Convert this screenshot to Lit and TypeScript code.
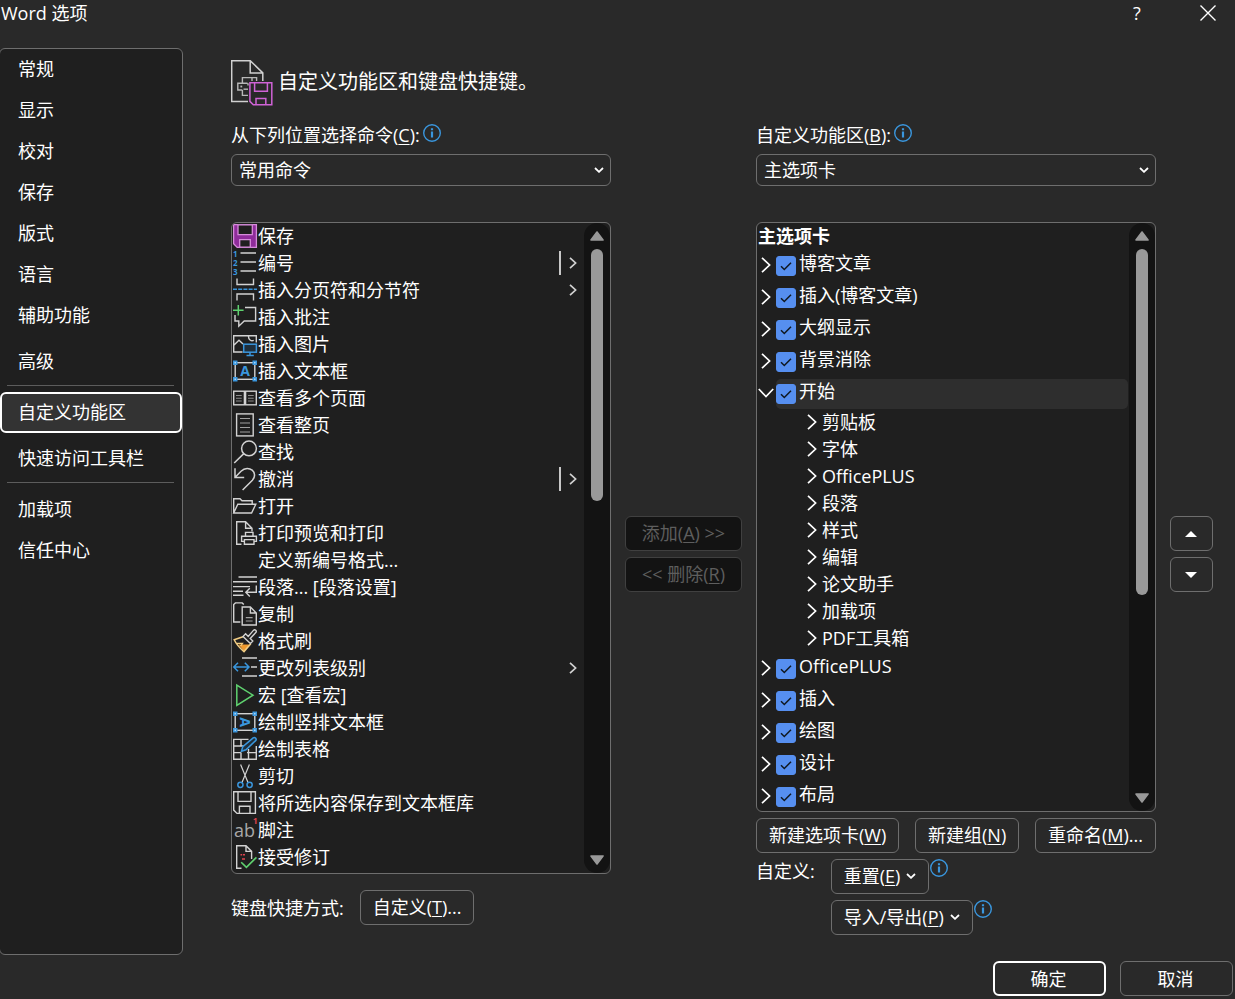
import { LitElement, html, svg, css, nothing, type TemplateResult } from "lit";
import { customElement, property, state } from "lit/decorators.js";
import { classMap } from "lit/directives/class-map.js";

const G = "#d2d2d2";
const BLUE = "#3a96dd";
const GREEN = "#5fd16f";

const corners = (fill: string) => svg`
  <g fill=${fill}>
    <rect x="0" y="1.5" width="4.5" height="4.5"/><rect x="19.5" y="1.5" width="4.5" height="4.5"/>
    <rect x="0" y="18" width="4.5" height="4.5"/><rect x="19.5" y="18" width="4.5" height="4.5"/>
  </g>
  <g fill="#a9d4f5">
    <rect x="1.5" y="3" width="1.5" height="1.5"/><rect x="21" y="3" width="1.5" height="1.5"/>
    <rect x="1.5" y="19.5" width="1.5" height="1.5"/><rect x="21" y="19.5" width="1.5" height="1.5"/>
  </g>`;

const icons: Record<string, TemplateResult> = {
  save: svg`<path d="M.6.6H23.4V23.4H4.2L.6 19.8Z" fill="#8f2c9b" stroke="#d68bda" stroke-width="1.3"/>
    <path d="M5 .8V10.7H19.3V.8ZM6.7 23.2V15.7H17.3V23.2Z" fill="#1f1f1f" stroke="#d68bda" stroke-width="1.3"/>`,
  numbering: svg`<path d="M7.5 2H23M7.5 11H23M7.5 20H23" stroke=${G} stroke-width="1.4"/>
    <g fill=${BLUE} font-size="8" font-weight="700" font-family="Open Sans"><text x="0" y="6">1</text><text x="0" y="15">2</text><text x="0" y="24">3</text></g>`,
  pagebreak: svg`<path d="M4 .5V6.5H20.5V.5M4 22.5V16H20.5V22.5" stroke=${G} stroke-width="1.4"/>
    <path d="M0 11.2H24" stroke=${BLUE} stroke-width="1.4" stroke-dasharray="4 1.2"/>`,
  comment: svg`<path d="M12 2.5H22.6V16H11.2L5.8 21.2V16H2V10" stroke=${G} stroke-width="1.4"/>
    <path d="M5.3 0V10.4M0 5.2H10.6" stroke=${GREEN} stroke-width="1.5"/>`,
  picture: svg`<path d="M9.5 20H.7V3.7H23.3V10.5M.8 13.2L6 8.2L10 12M15.5 4.5C15.4 7.5 18 9.5 20.8 8.3" stroke=${G} stroke-width="1.4"/>
    <rect x="10.7" y="12.2" width="12.7" height="8" fill="#1f2f3c" stroke=${BLUE} stroke-width="1.5"/>
    <path d="M17 20.2V23.4M13.5 23.4H20.8" stroke=${BLUE} stroke-width="1.5"/>`,
  textbox: svg`<rect x="2.2" y="3.7" width="19.6" height="16.6" stroke=${G} stroke-width="1.4"/>${corners(BLUE)}
    <text x="12" y="17" text-anchor="middle" font-size="14" font-weight="700" font-family="Open Sans" fill=${BLUE}>A</text>`,
  pages: svg`<rect x=".7" y="5.2" width="22.6" height="13.6" stroke=${G} stroke-width="1.4"/><path d="M12 5V19" stroke=${G} stroke-width="2.6"/>
    <path d="M3 9.5H8.7M3 12.2H8.7M3 15H8.7M15 9.5H20.7M15 12.2H20.7M15 15H20.7" stroke="#8a8a8a" stroke-width="1.1"/>`,
  page: svg`<rect x="3.6" y=".9" width="16.6" height="22" stroke=${G} stroke-width="1.4"/>
    <path d="M7 5.5H17M7 10H17M7 14.5H17M7 19H17" stroke="#a0a0a0" stroke-width="1.2"/>`,
  find: svg`<circle cx="16" cy="8.4" r="7.4" stroke=${G} stroke-width="1.5"/><path d="M10.8 13.6L1.2 23" stroke=${G} stroke-width="1.5"/>`,
  undo: svg`<path d="M2 1.2V10.4H11.2M2.2 10.2L8 4.2C16-3.4 26 6 19.4 13.2L9.6 23" stroke=${G} stroke-width="1.5"/>`,
  open: svg`<path d="M.7 19V4.7H7L9 6.8H19.2V10.2M.7 19L4.8 10.2H22.8L18.6 19Z" stroke=${G} stroke-width="1.4"/>`,
  print: svg`<path d="M8.5 23.2H3.7V.8H12.6L19 7.2V10.5M12.6.8V7.2H19" stroke=${G} stroke-width="1.4"/>
    <path d="M12.5 15.2V11.4H20V15.2M11.4 20.4H8.6V15.2H23.4V20.4H21M11.4 18.6H21V23.2H11.4Z" stroke=${G} stroke-width="1.4"/>`,
  paragraph: svg`<path d="M5.5 2H24M0 6.8H24M0 11.6H17M0 16.2H10M0 20.2H10.5M23.3 10.5V17.2H13M16.8 13.2L12.8 17.2L16.8 21.4" stroke=${G} stroke-width="1.4"/>`,
  copy: svg`<path d="M7.3 20H.7V2.6L2.4.9H9.2L10.8 2.6" stroke=${G} stroke-width="1.4"/>
    <path d="M9.2 5H17.4L23.3 11V23H9.2ZM17.4 5V11H23.3" stroke=${G} stroke-width="1.4"/><path d="M12.8 15.7H19.6M12.8 19H19.6" stroke="#a0a0a0" stroke-width="1.2"/>`,
  painter: svg`<path d="M5.5 15.5L17.5 15.5L11 22.3Z" fill="#f09a2e"/>
    <path d="M10 7.7L1.2 10.8C3 14.6 6.6 19 11 22.6L17.8 14.8" stroke="#f2cd83" stroke-width="1.5"/>
    <path d="M4 14.4H9.6L7.6 17" stroke="#f2cd83" stroke-width="1.2"/>
    <path d="M10 7.4L12.6 4.8L15.2 7.4L20.4 1.4C22-.1 24.2 2 22.8 3.6L17.2 9.4L19.8 12L17.4 14.6Z" stroke=${G} stroke-width="1.4"/>`,
  level: svg`<path d="M9 2H24M18 11H24M9 20H24" stroke=${G} stroke-width="1.4"/>
    <path d="M.8 11H16M5 6.8L.8 11L5 15.2M11.8 6.8L16 11L11.8 15.2" stroke=${BLUE} stroke-width="1.5"/>`,
  macro: svg`<path d="M3.8 2V22.4L20 12.2Z" stroke=${GREEN} stroke-width="1.5"/>`,
  vtextbox: svg`<rect x="2.2" y="3.7" width="19.6" height="16.6" stroke=${G} stroke-width="1.4"/>${corners(BLUE)}
    <text x="12" y="17" transform="rotate(90 12 12)" text-anchor="middle" font-size="14" font-weight="700" font-family="Open Sans" fill=${BLUE}>A</text>`,
  drawtable: svg`<path d="M15.5 2.4H.7V22.2H23.3V9M.7 9H11M.7 15.6H8M14 15.6H23.3M8 2.4V9M8 15.6V22.2M15.5 12V22.2" stroke=${G} stroke-width="1.4"/>
    <path d="M20.2.9C21.8-.3 24 1.8 22.9 3.4L13 12.8L8.4 14.3L9.8 9.7Z" fill="#1f2f3c" stroke=${BLUE} stroke-width="1.5"/>`,
  cut: svg`<path d="M7.6.4L15 18.6M16.4.4L9 18.6" stroke=${G} stroke-width="1.2"/>
    <circle cx="7.4" cy="20.8" r="2.6" stroke=${BLUE} stroke-width="1.5"/><circle cx="16.6" cy="20.8" r="2.6" stroke=${BLUE} stroke-width="1.5"/>`,
  savesel: svg`<path d="M.7.7H22.4V22.4H4L.7 19.1ZM5 .7V10.4H18V.7M6.4 22.4V15.2H17V22.4" stroke=${G} stroke-width="1.4"/>`,
  footnote: svg`<text x="1" y="19" font-size="18" font-family="Open Sans" fill="#a8a8a8">ab</text>
    <text x="20" y="6" font-size="8" font-family="Open Sans" font-weight="700" fill="#e0444f">1</text>`,
  accept: svg`<path d="M8.5 23.2H3.7V.8H13L18.6 6.4V14M13 .8V6.4H18.6" stroke=${G} stroke-width="1.4"/>
    <path d="M7.5 9.7H9.2M10 9.7H12M9 14H12" stroke="#e0444f" stroke-width="1.5"/>
    <path d="M8.2 17.2L13.4 22.4L23.4 12.4" stroke=${GREEN} stroke-width="1.6"/>`,
};

const infoIcon = html`<svg class="info" viewBox="0 0 18 18" width="18" height="18" fill="none" role="img" aria-label="信息">
  <circle cx="9" cy="9" r="8.3" stroke="#3a96dd" stroke-width="1.4"/><path d="M9 4.2V6.2M9 7.6V13.6" stroke="#3a96dd" stroke-width="2.2"/></svg>`;
const smallChevron = html`<svg class="down" viewBox="0 0 10 6" width="10" height="6" fill="none" aria-hidden="true">
  <path d="M1 1L5 4.8L9 1" stroke="#fff" stroke-width="1.8"/></svg>`;

const base = css`
  *, *::before, *::after { box-sizing: border-box; }
  button, select, input { font: inherit; color: inherit; margin: 0; }
  svg { display: block; flex: none; }
  u { text-decoration-thickness: 1px; text-underline-offset: 2px; }
`;

/** Scrolling frame with a drawn track, arrows and thumb. */
@customElement("list-frame")
export class ListFrame extends LitElement {
  @property({ type: Number }) thumb = 50;

  static styles = [base, css`
    :host { display: flex; border: 1px solid #6e6e6e; border-radius: 6px; background: #1f1f1f; overflow: hidden; }
    .view { flex: 1; min-width: 0; overflow: hidden; }
    .bar { flex: none; width: 26px; border-radius: 13px; background: #131313; display: flex; flex-direction: column; align-items: center; padding: 8px 0; gap: 8px; }
    .rail { flex: 1; width: 12px; }
    .thumb { border-radius: 6px; background: #999; }
  `];

  render() {
    return html`
      <div class="view"><slot></slot></div>
      <div class="bar" aria-hidden="true">
        <svg viewBox="0 0 14 10" width="14" height="10"><path d="M7 1L13 9H1Z" fill="#999" stroke="#999" stroke-width="1.6" stroke-linejoin="round"/></svg>
        <div class="rail"><div class="thumb" style="height:${this.thumb}%"></div></div>
        <svg viewBox="0 0 14 10" width="14" height="10"><path d="M7 9L13 1H1Z" fill="#999" stroke="#999" stroke-width="1.6" stroke-linejoin="round"/></svg>
      </div>`;
  }
}

type Command = { icon?: string; label: string; more?: boolean; split?: boolean };
const commands: Command[] = [
  { icon: "save", label: "保存" },
  { icon: "numbering", label: "编号", more: true, split: true },
  { icon: "pagebreak", label: "插入分页符和分节符", more: true },
  { icon: "comment", label: "插入批注" },
  { icon: "picture", label: "插入图片" },
  { icon: "textbox", label: "插入文本框" },
  { icon: "pages", label: "查看多个页面" },
  { icon: "page", label: "查看整页" },
  { icon: "find", label: "查找" },
  { icon: "undo", label: "撤消", more: true, split: true },
  { icon: "open", label: "打开" },
  { icon: "print", label: "打印预览和打印" },
  { label: "定义新编号格式..." },
  { icon: "paragraph", label: "段落... [段落设置]" },
  { icon: "copy", label: "复制" },
  { icon: "painter", label: "格式刷" },
  { icon: "level", label: "更改列表级别", more: true },
  { icon: "macro", label: "宏 [查看宏]" },
  { icon: "vtextbox", label: "绘制竖排文本框" },
  { icon: "drawtable", label: "绘制表格" },
  { icon: "cut", label: "剪切" },
  { icon: "savesel", label: "将所选内容保存到文本框库" },
  { icon: "footnote", label: "脚注" },
  { icon: "accept", label: "接受修订" },
];

@customElement("command-list")
export class CommandList extends LitElement {
  static styles = [base, css`
    :host { display: block; }
    ul { list-style: none; margin: 0; padding: 0 7px 2px 1px; }
    li { display: flex; align-items: center; height: 27px; padding-bottom: 1px; white-space: nowrap; }
    .icon { flex: none; width: 24px; height: 24px; margin-right: 1px; overflow: visible; }
    .label { flex: 1; line-height: 24px; }
    .split { width: 2px; height: 24px; margin-right: 8px; background: #c8c8c8; }
  `];

  render() {
    return html`<ul role="listbox" aria-label="常用命令">
      ${commands.map((c) => html`<li role="option">
        <svg class="icon" viewBox="0 0 24 24" fill="none" aria-hidden="true">${c.icon ? icons[c.icon] : nothing}</svg>
        <span class="label">${c.label}</span>
        ${c.split ? html`<span class="split"></span>` : nothing}
        ${c.more ? html`<svg viewBox="0 0 8 12" width="8" height="12" fill="none" aria-hidden="true"><path d="M1 .8L6.6 6L1 11.2" stroke=${G} stroke-width="1.7"/></svg>` : nothing}
      </li>`)}
    </ul>`;
  }
}

type Tab = { label: string; checked: boolean; open?: boolean; groups?: string[] };

@customElement("tab-tree")
export class TabTree extends LitElement {
  @state() private tabs: Tab[] = [
    { label: "博客文章", checked: true },
    { label: "插入(博客文章)", checked: true },
    { label: "大纲显示", checked: true },
    { label: "背景消除", checked: true },
    {
      label: "开始", checked: true, open: true,
      groups: ["剪贴板", "字体", "OfficePLUS", "段落", "样式", "编辑", "论文助手", "加载项", "PDF工具箱"],
    },
    { label: "OfficePLUS", checked: true },
    { label: "插入", checked: true },
    { label: "绘图", checked: true },
    { label: "设计", checked: true },
    { label: "布局", checked: true },
  ];

  static styles = [base, css`
    :host { display: block; white-space: nowrap; line-height: 24px; }
    .head { height: 27px; padding-left: 1px; line-height: 26px; font-weight: 700; }
    ul { list-style: none; margin: 0; padding: 0; }
    .row { display: flex; align-items: flex-start; height: 32px; padding-right: 1px; }
    .twisty { flex: none; display: grid; place-items: center; width: 19px; height: 32px; padding: 0 2px 2px 0; border: 0; background: none; }
    .item { flex: 1; display: flex; align-items: flex-start; gap: 3px; height: 30px; margin-top: 1px; border-radius: 5px; }
    .item.selected { background: #2e2e2e; }
    .check { display: grid; margin-top: 5px; }
    .check > * { grid-area: 1 / 1; }
    input { appearance: none; width: 20px; height: 20px; border: 1px solid #8a8a8a; border-radius: 3px; }
    input:checked { border-color: #568ff0; background: #568ff0; }
    input:not(:checked) + svg { visibility: hidden; }
    .check svg { pointer-events: none; }
    .group { display: flex; align-items: center; height: 27px; padding: 0 0 3px 47px; }
    .group .twisty { height: 24px; width: 18px; padding-bottom: 0; }
  `];

  private toggle(i: number) {
    this.tabs = this.tabs.map((t, n) => (n === i ? { ...t, open: !t.open } : t));
  }

  render() {
    const right = html`<svg viewBox="0 0 10 16" width="10" height="16" fill="none"><path d="M1 .8L8.6 8L1 15.2" stroke="#fff" stroke-width="1.7"/></svg>`;
    const down = html`<svg viewBox="0 0 16 10" width="16" height="10" fill="none"><path d="M.8 1L8 8.6L15.2 1" stroke="#fff" stroke-width="1.7"/></svg>`;
    return html`
      <div class="head">主选项卡</div>
      <ul>
        ${this.tabs.map((t, i) => html`<li>
          <div class="row">
            <button class="twisty" aria-label="展开 ${t.label}" aria-expanded=${t.open ? "true" : "false"} @click=${() => this.toggle(i)}>${t.open ? down : right}</button>
            <div class=${classMap({ item: true, selected: t.label === "开始" })}>
              <span class="check">
                <input type="checkbox" id="tab-${i}" .checked=${t.checked}>
                <svg viewBox="0 0 20 20" width="20" height="20" fill="none" aria-hidden="true"><path d="M5 10.2L8.3 13.5L15 6.8" stroke="#101820" stroke-width="1.5"/></svg>
              </span>
              <label for="tab-${i}">${t.label}</label>
            </div>
          </div>
          ${t.open && t.groups ? html`<ul>${t.groups.map((g) => html`<li class="group">
            <button class="twisty" aria-label="展开 ${g}">${right}</button><span>${g}</span></li>`)}</ul>` : nothing}
        </li>`)}
      </ul>`;
  }
}

const sections: string[][] = [
  ["常规", "显示", "校对", "保存", "版式", "语言", "辅助功能"],
  ["高级"],
  ["自定义功能区"],
  ["快速访问工具栏"],
  ["加载项", "信任中心"],
];

@customElement("app-root")
export class AppRoot extends LitElement {
  @state() private current = "自定义功能区";

  static styles = [base, css`
    :host {
      display: flex; flex-direction: column; min-height: 100vh; box-sizing: border-box;
      background: #292929; color: #fff; font: 18px/24px "Open Sans", "Noto Sans CJK SC", sans-serif;
    }
    .title { display: flex; align-items: center; height: 28px; padding: 0 18px 0 1px; margin-bottom: 20px; }
    .title h1 { flex: 1; margin: 0; padding-bottom: 2px; font-size: 18px; font-weight: 400; line-height: 26px; }
    .icon-button { display: grid; place-items: center; height: 28px; padding: 0 0 2px; border: 0; background: none; }
    .help { width: 24px; margin-right: 50px; }
    .body { flex: 1; display: flex; }
    nav { flex: none; width: 184px; margin-left: -1px; border: 1px solid #6e6e6e; border-radius: 6px; background: #1f1f1f; }
    .nav-item { display: block; width: 100%; height: 41px; padding: 0 0 2px 16px; border: 2px solid transparent; border-radius: 6px; background: none; text-align: left; }
    .nav-item.current { border-color: #fff; background: #333; }
    .section + .section { margin-top: 5px; }
    .section.ruled { margin-top: 3px; padding-top: 6px; }
    .section.ruled::before { content: ""; display: block; height: 1px; margin: -6px 8px 6px 7px; background: #5c5c5c; }
    main { flex: 1; min-width: 0; padding: 12px 22px 0 48px; }
    .intro { display: flex; align-items: center; gap: 5px; height: 46px; margin-bottom: 16px; }
    .intro h2 { margin: 0; padding-bottom: 2px; font-size: 20px; font-weight: 400; line-height: 28px; }
    .columns { display: grid; grid-template-columns: minmax(0, 380fr) auto minmax(0, 400fr) 43px; column-gap: 14px; }
    .column { display: flex; flex-direction: column; min-width: 0; }
    .caption { display: flex; gap: 3px; height: 32px; line-height: 26px; }
    .pick { display: grid; align-items: center; margin-bottom: 36px; }
    .pick > * { grid-area: 1 / 1; }
    .pick .down { justify-self: end; margin-right: 7px; pointer-events: none; }
    select { appearance: none; width: 100%; height: 32px; padding: 0 7px; border: 1px solid #6e6e6e; border-radius: 6px; background: #292929; }
    .info { margin-top: 2px; }
    .side { display: flex; flex-direction: column; gap: 6px; padding-top: 394px; }
    .button { display: inline-flex; align-items: center; justify-content: center; gap: 6px; height: 35px; padding: 0 12px 2px; border: 1px solid #6e6e6e; border-radius: 6px; background: #292929; white-space: nowrap; }
    .button:disabled { border-color: #404040; background: #131313; color: #5e5e5e; }
    .transfer { width: 117px; padding: 0 0 2px; }
    .move { padding: 0 2px 0 0; }
    .keys { display: flex; align-items: center; gap: 16px; margin-top: 16px; }
    .keys span { line-height: 24px; }
    .tabs-view { height: 590px; }
    .edit { display: flex; justify-content: space-between; margin-top: 6px; }
    .custom { display: grid; grid-template-columns: auto 1fr; gap: 6px 16px; margin-top: 6px; }
    .custom .with-info { grid-column: 2; display: flex; gap: 1px; }
    .custom .info { margin: 0; }
    footer { display: flex; justify-content: flex-end; gap: 14px; padding: 6px 2px 3px; }
    .dialog { width: 113px; padding: 0 2px 0 0; }
    .primary { border: 2px solid #fff; }
  `];

  render() {
    return html`
      <header class="title">
        <h1>Word 选项</h1>
        <button class="icon-button help" aria-label="帮助">?</button>
        <button class="icon-button" aria-label="关闭">
          <svg viewBox="0 0 18 18" width="18" height="18" fill="none"><path d="M1.5 1.5L16.5 16.5M16.5 1.5L1.5 16.5" stroke="#fff" stroke-width="1.4"/></svg>
        </button>
      </header>
      <div class="body">
        <nav aria-label="Word 选项">
          ${sections.map((items, i) => html`<div class=${classMap({ section: true, ruled: i === 2 || i === 4 })}>
            ${items.map((name) => html`<button class=${classMap({ "nav-item": true, current: name === this.current })}
              @click=${() => { this.current = name; }}>${name}</button>`)}
          </div>`)}
        </nav>
        <main>
          <div class="intro">
            <svg viewBox="0 0 42 46" width="42" height="46" fill="none" aria-hidden="true">
              <path d="M17 41.4H.7V.7H19.2L31.8 12.9V21M19.2.7V12.9H31.8" stroke="#d0d0d0" stroke-width="1.5"/>
              <path d="M21 21V17.6H11.4V23.2M16.5 23.2H6.8V30H11.4M21.5 17.6H25.6V21M11.4 30V35.4H17M17 25.6V23.2" stroke="#b8b8b8" stroke-width="1.4"/>
              <path d="M12.5 29.2H17" stroke="#b8b8b8" stroke-width="1.4"/>
              <rect x="9.4" y="25.6" width="1.8" height="1.8" fill="#b8b8b8"/>
              <path d="M18.9 22.8H40.8V44.7H22.3L18.9 41.4ZM23.6 22.8V31.2H36.4V22.8M25 44.7V38.4H34.8V44.7" stroke="#cf63d6" stroke-width="1.5"/>
            </svg>
            <h2>自定义功能区和键盘快捷键。</h2>
          </div>
          <div class="columns">
            <section class="column">
              <div class="caption"><label for="source">从下列位置选择命令(<u>C</u>):</label>${infoIcon}</div>
              <div class="pick"><select id="source"><option>常用命令</option></select>${smallChevron}</div>
              <list-frame .thumb=${42.2}><command-list></command-list></list-frame>
              <div class="keys"><span>键盘快捷方式:</span><button class="button"><span>自定义(<u>T</u>)...</span></button></div>
            </section>
            <div class="side">
              <button class="button transfer" disabled><span>添加(<u>A</u>) &gt;&gt;</span></button>
              <button class="button transfer" disabled><span>&lt;&lt; 删除(<u>R</u>)</span></button>
            </div>
            <section class="column">
              <div class="caption"><label for="target">自定义功能区(<u>B</u>):</label>${infoIcon}</div>
              <div class="pick"><select id="target"><option>主选项卡</option></select>${smallChevron}</div>
              <list-frame class="tabs-view" .thumb=${64.6}><tab-tree></tab-tree></list-frame>
              <div class="edit">
                <button class="button"><span>新建选项卡(<u>W</u>)</span></button>
                <button class="button"><span>新建组(<u>N</u>)</span></button>
                <button class="button"><span>重命名(<u>M</u>)...</span></button>
              </div>
              <div class="custom">
                <span>自定义:</span>
                <div class="with-info"><button class="button"><span>重置(<u>E</u>)</span>${smallChevron}</button>${infoIcon}</div>
                <div class="with-info"><button class="button"><span>导入/导出(<u>P</u>)</span>${smallChevron}</button>${infoIcon}</div>
              </div>
            </section>
            <div class="side">
              <button class="button move" aria-label="上移"><svg viewBox="0 0 12 6" width="12" height="6"><path d="M6 0L12 6H0Z" fill="#fff"/></svg></button>
              <button class="button move" aria-label="下移"><svg viewBox="0 0 12 6" width="12" height="6"><path d="M6 6L12 0H0Z" fill="#fff"/></svg></button>
            </div>
          </div>
        </main>
      </div>
      <footer>
        <button class="button dialog primary">确定</button>
        <button class="button dialog">取消</button>
      </footer>`;
  }
}
